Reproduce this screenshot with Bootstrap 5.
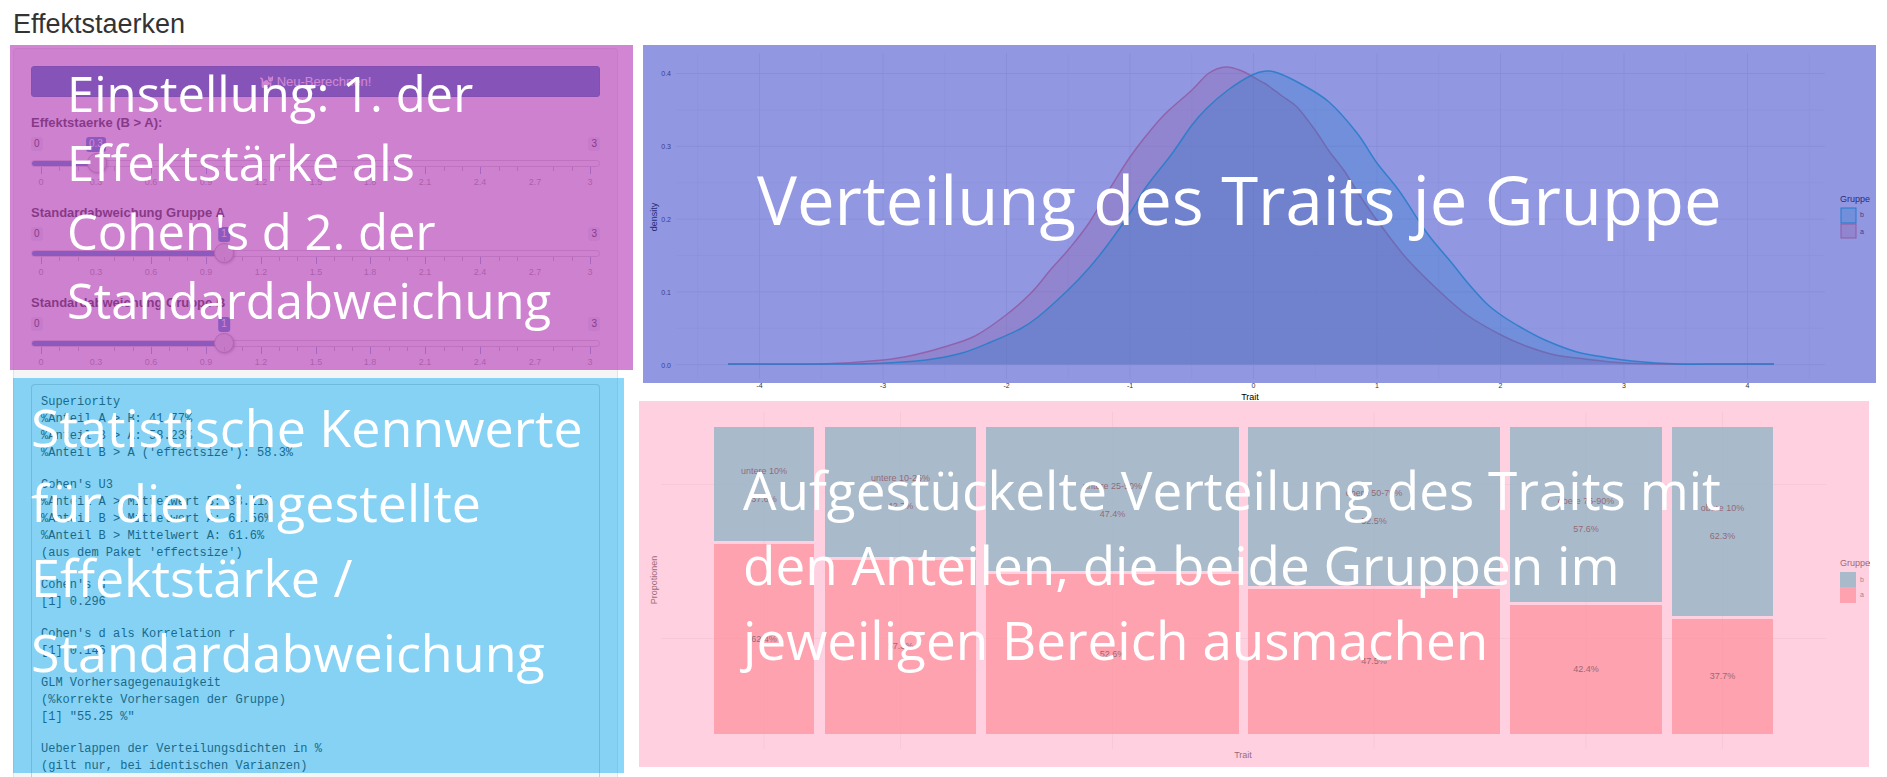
<!DOCTYPE html>
<html lang="de">
<head>
<meta charset="utf-8">
<meta name="viewport" content="width=device-width, initial-scale=1">
<title>Effektstaerken</title>
<link href="https://cdn.jsdelivr.net/npm/bootstrap@5.3.0/dist/css/bootstrap.min.css" rel="stylesheet">
<style>
  body { font-family: "Liberation Sans", Arial, sans-serif; font-size: 13px; color: #333; background: #fff; }
  .page-title { font-size: 27px; line-height: 45px; padding-left: 13px; height: 45px; padding-top: 2px; }
  .board { display: grid; grid-template-columns: 623fr 1237fr; column-gap: 6px; padding: 0 11px 0 10px; min-height: 0; }
  .panel-well { margin: 3px 15px 0 3px; padding: 17px 17px 0; background: #f5f5f5; border: 1px solid #e3e3e3; border-bottom: 0; border-radius: 4px 4px 0 0; }
  .settings { padding-bottom: 2px; margin-bottom: 8px; }
  .stats { padding-top: 6px; min-height: 0; }
  .tint { position: absolute; pointer-events: none; z-index: 1; isolation: isolate; }
  .tint::before { content: ""; position: absolute; inset: 0; z-index: -1; }
  .tint-settings { inset: -21px -33px 0 -21px; padding: 14px 0 0 57px; }
  .tint-settings::before { background: #b83dba; opacity: .63; }
  .tint-stats { inset: 0 -24px 4px -18px; padding: 11px 0 0 18px; }
  .tint-stats::before { background: #00a8f3; opacity: .46; }
  .note { font-family: "Open Sans", "Noto Sans", sans-serif; color: #fff; white-space: nowrap; margin: 0; }
  .note-settings { font-size: 49px; line-height: 69px; }
  .note-stats { font-size: 52px; line-height: 75px; }
  .note-density { font-size: 67px; line-height: 90px; left: 118px; top: 109px; }
  .note-mosaic { font-size: 53px; line-height: 75px; left: 104px; top: 51px; }
  .btn-run { background: #337ab7; border: 1px solid #2e6da4; color: #fff; font-size: 13px; line-height: 19px; padding: 5px; border-radius: 3px; margin-bottom: 17px; }
  .dial + .dial { margin-top: 16px; }
  .dial label { display: block; font-weight: 700; line-height: 18px; margin-bottom: 5px; }
  .dial-tags { height: 16px; font-size: 10px; line-height: 14px; }
  .dial-tags span { height: 14px; padding: 0 3px; border-radius: 3px; background: #e1e4e9; }
  .dial-tags .dial-value { position: absolute; top: 0; height: 15px; background: #428bca; color: #fff; transform: translateX(-50%);
    left: calc(10px + (100% - 20px) * var(--part)); }
  .dial input { appearance: none; -webkit-appearance: none; display: block; width: 100%; height: 21px; margin: 0; background: none; }
  .dial input::-webkit-slider-runnable-track { height: 7px; border: 1px solid #ccc; border-radius: 4px;
    background: linear-gradient(to right, #428bca calc(10px + (100% - 20px) * var(--part)), #f5f5f5 0) border-box; }
  .dial input::-webkit-slider-thumb { -webkit-appearance: none; width: 20px; height: 20px; margin-top: -8px; border-radius: 50%;
    background: #dedede; border: 1px solid #aaa; box-shadow: 1px 1px 3px rgba(0,0,0,.3); }
  .dial-scale { display: block; width: 100%; margin-top: -7px; overflow: visible; }
  .dial-scale text { font-size: 9px; fill: #999; text-anchor: middle; }
  .output { margin: 0; padding: 9px 9px 0; border: 1px solid #ccc; border-bottom: 0; border-radius: 4px 4px 0 0; background: #f5f5f5; color: #333;
    font: 12px/17px "Liberation Mono", monospace; display: grid; row-gap: 15px; align-content: start; overflow: hidden; }
  .plots { min-width: 0; }
  .plot svg { display: block; width: 100%; }
  .plot svg text { font-family: "Liberation Sans", Arial, sans-serif; font-size: 9px; }
  .plot svg .tick { font-size: 7px; fill: #333; }
  .plot .note { position: absolute; }
</style>
</head>
<body>
<main class="vh-100 overflow-hidden d-flex flex-column">
  <h1 class="page-title m-0 fw-normal flex-shrink-0">Effektstaerken</h1>
  <div class="board flex-grow-1">
    <aside class="panel-well d-flex flex-column">
      <section class="settings position-relative">
        <button type="button" class="btn btn-run w-100 d-flex align-items-center justify-content-center gap-1">
          <svg width="13" height="13" viewBox="0 0 512 512" fill="currentColor" aria-hidden="true"><path d="M290.590 192c-20.180 0-106.820 1.980-162.590 85.950V192c0-52.940-43.060-96-96-96-17.670 0-32 14.330-32 32s14.330 32 32 32c17.640 0 32 14.360 32 32v256c0 35.300 28.700 64 64 64h176c8.840 0 16-7.160 16-16v-16c0-17.670-14.330-32-32-32h-32l128-96v144c0 8.840 7.160 16 16 16h32c8.840 0 16-7.160 16-16V289.860c-10.290 2.670-20.890 4.540-32 4.540-61.810 0-113.520-44.050-125.410-102.400zM448 96h-64l-64-64v134.400c0 53.020 42.980 96 96 96s96-42.980 96-96V32l-64 64zm-72 80c-8.840 0-16-7.160-16-16s7.160-16 16-16 16 7.160 16 16-7.160 16-16 16zm80 0c-8.840 0-16-7.160-16-16s7.160-16 16-16 16 7.160 16 16-7.160 16-16 16z"/></svg>
          <span>Neu-Berechnen!</span>
        </button>
        <div class="dial" style="--part:.1">
          <label for="effekt">Effektstaerke (B &gt; A):</label>
          <div class="dial-tags position-relative d-flex justify-content-between"><span>0</span><span class="dial-value">0.3</span><span>3</span></div>
          <input type="range" id="effekt" min="0" max="3" step="0.1" value="0.3">
          <svg class="dial-scale" viewBox="0 0 569 21"></svg>
        </div>
        <div class="dial" style="--part:.3333">
          <label for="sd-a">Standardabweichung Gruppe A</label>
          <div class="dial-tags position-relative d-flex justify-content-between"><span>0</span><span class="dial-value">1</span><span>3</span></div>
          <input type="range" id="sd-a" min="0" max="3" step="0.1" value="1">
          <svg class="dial-scale" viewBox="0 0 569 21"></svg>
        </div>
        <div class="dial" style="--part:.3333">
          <label for="sd-b">Standardabweichung Gruppe B</label>
          <div class="dial-tags position-relative d-flex justify-content-between"><span>0</span><span class="dial-value">1</span><span>3</span></div>
          <input type="range" id="sd-b" min="0" max="3" step="0.1" value="1">
          <svg class="dial-scale" viewBox="0 0 569 21"></svg>
        </div>
        <div class="tint tint-settings"><p class="note note-settings">Einstellung: 1. der<br>Effektstärke als<br>Cohen's d 2. der<br>Standardabweichung</p></div>
      </section>
      <section class="stats position-relative flex-grow-1 d-flex flex-column">
<pre class="output flex-grow-1"><span>Superiority
%Anteil A &gt; B: 41.77%
%Anteil B &gt; A: 58.23%
%Anteil B &gt; A ('effectsize'): 58.3%</span><span>Cohen's U3
%Anteil A &gt; Mittelwert B: 38.11%
%Anteil B &gt; Mittelwert A: 61.56%
%Anteil B &gt; Mittelwert A: 61.6%
(aus dem Paket 'effectsize')</span><span>Cohen's d
[1] 0.296</span><span>Cohen's d als Korrelation r
[1] 0.146</span><span>GLM Vorhersagegenauigkeit
(%korrekte Vorhersagen der Gruppe)
[1] "55.25 %"</span><span>Ueberlappen der Verteilungsdichten in %
(gilt nur, bei identischen Varianzen)</span></pre>
        <div class="tint tint-stats"><p class="note note-stats">Statistische Kennwerte<br>für die eingestellte<br>Effektstärke /<br>Standardabweichung</p></div>
      </section>
    </aside>
    <div class="plots">
      <figure class="plot position-relative m-0">
        <svg id="density" viewBox="639 45 1237 356" role="img" aria-label="Dichte des Traits je Gruppe"></svg>
        <figcaption class="note note-density">Verteilung des Traits je Gruppe</figcaption>
      </figure>
      <figure class="plot position-relative m-0">
        <svg id="mosaic" viewBox="639 401 1237 370" role="img" aria-label="Anteile der Gruppen je Bereich"></svg>
        <figcaption class="note note-mosaic">Aufgestückelte Verteilung des Traits mit<br>den Anteilen, die beide Gruppen im<br>jeweiligen Bereich ausmachen</figcaption>
      </figure>
    </div>
  </div>
</main>
<script src="https://cdn.jsdelivr.net/npm/bootstrap@5.3.0/dist/js/bootstrap.bundle.min.js"></script>
<script>
  const line = (x1, y1, x2, y2, c, w = 1) => `<path d="M${x1} ${y1}L${x2} ${y2}" stroke="${c}" stroke-width="${w}" fill="none"/>`;
  const text = (x, y, s, anchor = 'middle', extra = '') => `<text x="${x}" y="${y}" text-anchor="${anchor}" ${extra}>${s}</text>`;
  const rect = (x, y, w, h, c, extra = '') => `<rect x="${x}" y="${y}" width="${w}" height="${h}" fill="${c}" ${extra}/>`;
  const B = '#00bfc4', A = '#f8766d', GRID = '#ebebeb';

  // slider scales: a tick every 0.1, a label every 0.3
  let scale = '';
  for (let i = 0; i <= 30; i++) {
    const x = Math.round(10 + 18.3 * i), major = i % 3 === 0;
    if (i !== 3 && i !== 27) scale += line(x + .5, 0, x + .5, major ? 7 : 4, major ? '#85aed0' : '#b8b8c4');
    if (major) scale += text(x, 18, +(i / 10).toFixed(1));
  }
  document.querySelectorAll('.dial-scale').forEach(s => s.innerHTML = scale);

  // smooth curve through the sampled points
  function smooth(p) {
    let d = `M${p[0]}`;
    for (let i = 0; i < p.length - 1; i++) {
      const a = p[i - 1] || p[i], b = p[i], c = p[i + 1], e = p[i + 2] || c;
      d += `C${b[0] + (c[0] - a[0]) / 6} ${b[1] + (c[1] - a[1]) / 6} ${c[0] - (e[0] - b[0]) / 6} ${c[1] - (e[1] - b[1]) / 6} ${c[0]} ${c[1]}`;
    }
    return d;
  }
  const groupA = [[728,364],[820,364],[883,360],[918,354],[944,347],[975,336],[1006,315],[1031,293],[1052,268],[1069,249],[1089,223],[1109,190],[1130,157],[1150,131],[1166,113],[1192,90],[1209,73],[1226,67],[1242,71],[1253,77],[1264,83],[1270,87],[1282,96],[1297,107],[1315,130],[1329,151],[1345,172],[1364,202],[1388,235],[1408,260],[1437,289],[1467,315],[1501,335],[1526,346],[1555,355],[1585,359],[1624,363],[1679,364],[1774,364]];
  const groupB = [[728,364],[844,364],[885,363],[926,360],[962,353],[991,342],[1020,329],[1038,317],[1068,290],[1089,268],[1109,243],[1130,213],[1146,187],[1171,155],[1192,125],[1207,108],[1228,90],[1252,75],[1266,71],[1278,73],[1301,84],[1329,102],[1357,133],[1377,163],[1400,192],[1427,233],[1451,262],[1467,282],[1486,303],[1501,315],[1522,328],[1545,340],[1577,352],[1604,357],[1632,361],[1679,364],[1726,364],[1774,364]];
  let s = '';
  for (let i = 0; i < 9; i++) s += line(676, 73.5 + 36.4 * i, 1825, 73.5 + 36.4 * i, GRID, i % 2 ? .5 : 1);
  for (let i = -9; i < 10; i++) s += line(1253.5 + 61.75 * i, 53, 1253.5 + 61.75 * i, 379, GRID, i % 2 ? .5 : 1);
  [[groupA, A], [groupB, B]].forEach(([p, c]) => {
    const d = smooth(p);
    s += `<path d="${d}V364.500H728Z" fill="${c}" fill-opacity=".3"/><path d="${d}" fill="none" stroke="${c}" stroke-opacity=".85" stroke-width="1.500"/>`;
  });
  for (let i = 0; i < 5; i++) s += text(671, 76 + 73 * i, (0.4 - i / 10).toFixed(1), 'end', 'class="tick"');
  for (let i = -4; i < 5; i++) s += text(1253.5 + 123.5 * i, 388, i, 'middle', 'class="tick"');
  s += text(0, 0, 'density', 'middle', 'transform="translate(657 217) rotate(-90)"') + text(1250, 400, 'Trait');
  s += text(1840, 202, 'Gruppe', 'start');
  s += rect(1841, 208, 15, 15, B, `fill-opacity=".3" stroke="${B}"`) + rect(1841, 224, 15, 14, A, `fill-opacity=".3" stroke="${A}"`);
  s += text(1860, 217, 'b', 'start', 'class="tick"') + text(1860, 234, 'a', 'start', 'class="tick"');
  s += rect(643, 45, 1233, 338, '#3f48cc', 'opacity=".57"');
  document.getElementById('density').innerHTML = s;

  // left, right, split between the groups, name, share b, share a
  const cols = [[714,814,541,'untere 10%',37.6,62.4],[825,976,557,'untere 10-25%',42.7,57.3],[986,1239,571,'untere 25-50%',47.4,52.6],[1248,1500,586,'obere 50-75%',52.5,47.5],[1510,1662,602,'obere 75-90%',57.6,42.4],[1672,1773,616,'obere 10%',62.3,37.7]];
  let m = line(661, 484.5, 1826, 484.5, GRID) + line(661, 638.5, 1826, 638.5, GRID);
  cols.forEach(([x1, x2, y, name, b, a], i) => {
    const cx = (x1 + x2) / 2, t = Math.round(7.4 * i);
    m += line(cx, 412, cx, 749, GRID);
    m += rect(x1, 427, x2 - x1, y - 427, B, 'fill-opacity=".8"') + rect(x1, y + 3, x2 - x1, 731 - y, A, 'fill-opacity=".8"');
    m += text(cx, 474 + t, name) + text(cx, 502 + t, b.toFixed(1) + '%') + text(cx, 642 + t, a.toFixed(1) + '%');
  });
  m += text(0, 0, 'Propotionen', 'middle', 'transform="translate(657 580) rotate(-90)"') + text(1243, 758, 'Trait') + text(1840, 566, 'Gruppe', 'start');
  m += rect(1840, 572, 16, 15, B, 'fill-opacity=".8"') + rect(1840, 587, 16, 16, A, 'fill-opacity=".8"');
  m += text(1860, 582, 'b', 'start', 'class="tick"') + text(1860, 597, 'a', 'start', 'class="tick"');
  m += rect(639, 401, 1230, 366, '#ffaec8', 'opacity=".58"');
  document.getElementById('mosaic').innerHTML = m;
</script>
</body>
</html>
